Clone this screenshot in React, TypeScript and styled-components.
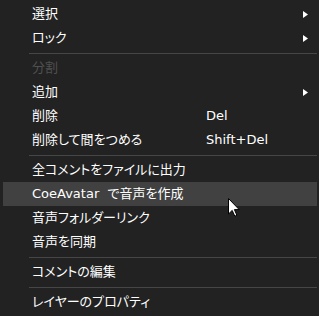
import React from "react";
import styled, { createGlobalStyle } from "styled-components";

const GlobalStyle = createGlobalStyle`
  html, body {
    margin: 0;
    padding: 0;
    background: #222222;
  }
`;

const Menu = styled.div`
  position: relative;
  width: 319px;
  height: 316px;
  box-sizing: border-box;
  padding: 2px 2px 2px 3px;
  background: #222222;
  font-family: "DejaVu Sans", "Noto Sans CJK JP", sans-serif;
  font-size: 13px;
  font-feature-settings: "palt";
  color: #ffffff;
  overflow: hidden;
`;

const Item = styled.div<{ $active?: boolean; $disabled?: boolean }>`
  display: grid;
  grid-template-columns: 174px 1fr 14px;
  align-items: center;
  height: 24px;
  padding-left: 29px;
  background: ${(p) => (p.$active ? "#414141" : "transparent")};
  color: ${(p) => (p.$disabled ? "#505050" : "#ffffff")};
  white-space: pre;
`;

const Label = styled.span`
  line-height: 24px;
`;

const Shortcut = styled.span`
  line-height: 24px;
`;

const Separator = styled.div`
  height: 6px;
  display: flex;
  align-items: center;
  padding-left: 26px;

  &::after {
    content: "";
    flex: 1;
    height: 1px;
    background: #464646;
  }
`;

const Arrow = styled.svg`
  width: 5px;
  height: 7px;
  display: block;
`;

const Cursor = styled.svg`
  position: absolute;
  left: 228px;
  top: 198px;
  width: 12px;
  height: 19px;
`;

type Entry =
  | { kind: "sep" }
  | {
      kind: "item";
      label: string;
      shortcut?: string;
      sub?: boolean;
      disabled?: boolean;
      active?: boolean;
    };

const entries: Entry[] = [
  { kind: "item", label: "選択", sub: true },
  { kind: "item", label: "ロック", sub: true },
  { kind: "sep" },
  { kind: "item", label: "分割", disabled: true },
  { kind: "item", label: "追加", sub: true },
  { kind: "item", label: "削除", shortcut: "Del" },
  { kind: "item", label: "削除して間をつめる", shortcut: "Shift+Del" },
  { kind: "sep" },
  { kind: "item", label: "全コメントをファイルに出力" },
  { kind: "item", label: "CoeAvatar  で音声を作成", active: true },
  { kind: "item", label: "音声フォルダーリンク" },
  { kind: "item", label: "音声を同期" },
  { kind: "sep" },
  { kind: "item", label: "コメントの編集" },
  { kind: "sep" },
  { kind: "item", label: "レイヤーのプロパティ" },
];

const SubArrow = () => (
  <Arrow viewBox="0 0 5 7">
    <path d="M0 0 L5 3.5 L0 7 Z" fill="#ffffff" />
  </Arrow>
);

export default function App() {
  return (
    <>
      <GlobalStyle />
      <Menu>
        {entries.map((e, i) =>
          e.kind === "sep" ? (
            <Separator key={i} />
          ) : (
            <Item key={i} $active={e.active} $disabled={e.disabled}>
              <Label>{e.label}</Label>
              <Shortcut>{e.shortcut ?? ""}</Shortcut>
              <span>{e.sub && <SubArrow />}</span>
            </Item>
          )
        )}
        <Cursor viewBox="0 0 12 19">
          <path
            d="M0.5 0.5 L0.5 16 L4.2 12.4 L6.8 18.2 L8.9 17.3 L6.4 11.6 L11.2 11.6 Z"
            fill="#ffffff"
            stroke="#000000"
            strokeWidth="1"
            strokeLinejoin="miter"
          />
        </Cursor>
      </Menu>
    </>
  );
}
